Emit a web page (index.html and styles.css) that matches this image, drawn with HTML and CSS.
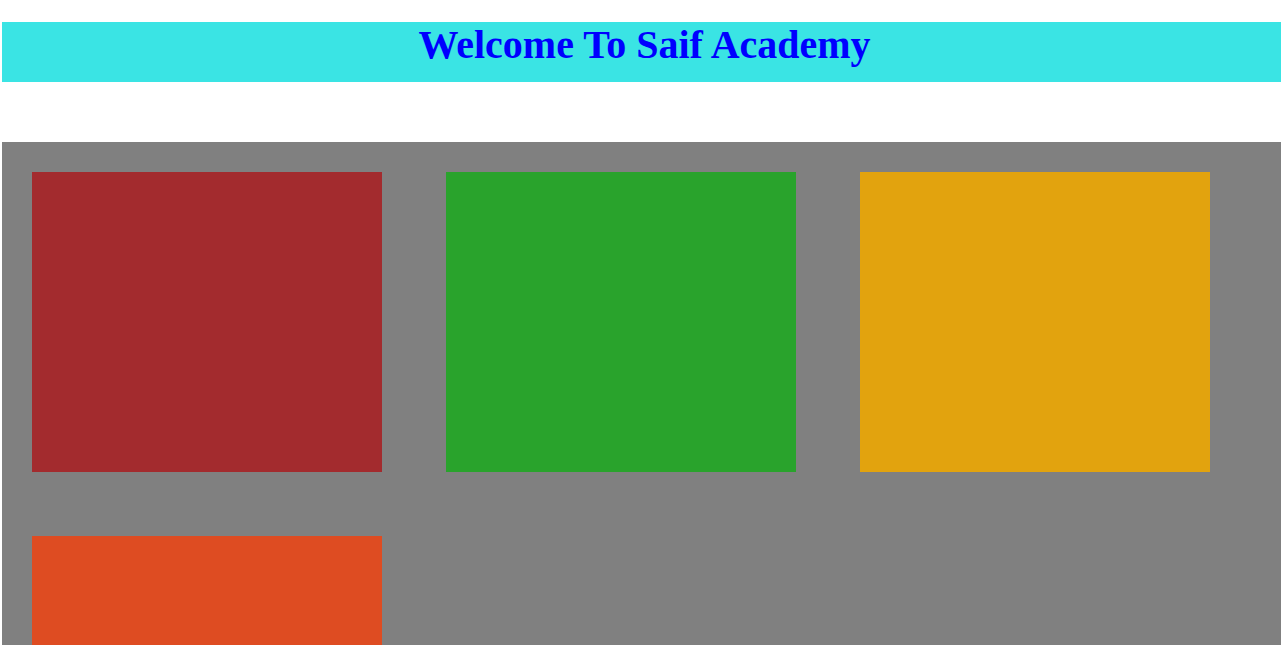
FILE: index.html
```html
<!DOCTYPE html>
<html>
<head>
<meta charset="utf-8">
<title>Saif Academy</title>
<link rel="stylesheet" href="styles.css">
</head>
<body>
<h1 class="banner">Welcome To Saif Academy</h1>
<div class="board">
  <div class="tile tile-red"></div>
  <div class="tile tile-green"></div>
  <div class="tile tile-yellow"></div>
  <div class="tile tile-orange"></div>
</div>
</body>
</html>
```
FILE: styles.css
```css
html, body {
  margin: 0;
  padding: 0;
  background: #ffffff;
  overflow: hidden;
}
body {
  padding: 22px 0 0 2px;
}
.banner {
  margin: 0;
  height: 60px;
  background: #3ae4e4;
  color: #0000ff;
  font-family: "Liberation Serif", "Times New Roman", serif;
  font-size: 40px;
  font-weight: bold;
  line-height: 46px;
  text-align: center;
  padding-left: 6px;
}
.board {
  margin-top: 60px;
  background: #808080;
  padding: 30px;
  display: flex;
  flex-wrap: wrap;
  column-gap: 64px;
  row-gap: 64px;
  height: 600px;
  align-content: flex-start;
}
.tile {
  width: 350px;
  height: 300px;
}
.tile-red { background: #a32b2e; }
.tile-green { background: #29a32c; }
.tile-yellow { background: #e2a30e; }
.tile-orange { background: #de4c22; }
```
